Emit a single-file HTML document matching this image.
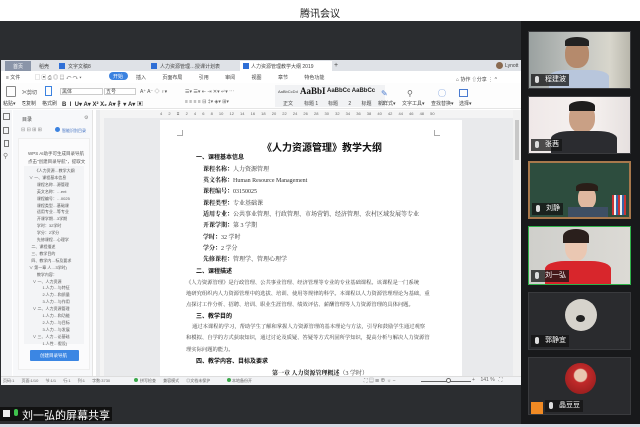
<!DOCTYPE html>
<html><head><meta charset="utf-8"><style>
*{margin:0;padding:0;box-sizing:border-box}
body{width:640px;height:427px;overflow:hidden;background:#2b2d30;position:relative;font-family:"Liberation Sans","Noto Sans CJK SC",sans-serif}
.a{position:absolute}
.t{position:absolute;white-space:nowrap;font-size:5px;color:#444}
.d{position:absolute;white-space:nowrap;font-family:"Liberation Serif","Noto Serif CJK SC",serif;font-size:6px;color:#333}
.p{font-size:5.3px}
.b{font-weight:bold;color:#111}
.tile{position:absolute;left:528px;width:103px;border:1px solid #3a3b3e;background:#1f2023;overflow:hidden}
.lab{position:absolute;left:2px;bottom:2px;height:12px;background:rgba(20,20,20,.75);color:#fff;font-size:7px;line-height:12px;padding:0 3px 0 14px;white-space:nowrap}
.lab:before{content:"";position:absolute;left:4px;top:2px;width:4px;height:7px;border-radius:2px;background:#ddd}
</style></head><body>
<div class="a" style="left:0;top:0;width:640px;height:21px;background:#fff"></div>
<div class="t" style="left:300px;top:5px;font-size:10px;color:#222">腾讯会议</div>
<div class="a" style="left:1px;top:60px;width:520px;height:325px;background:#fff"></div>
<div class="a" style="left:1px;top:60px;width:520px;height:11px;background:#dfe2e7"></div>
<div class="a" style="left:5px;top:61px;width:26px;height:10px;background:#8a95a8"></div>
<div class="t" style="left:13px;top:63px;color:#fff">首页</div>
<div class="t" style="left:39px;top:63px">稻壳</div>
<div class="a" style="left:59px;top:63px;width:6px;height:6px;background:#2f6fd6"></div>
<div class="t" style="left:68px;top:63px">文字文稿8</div>
<div class="a" style="left:151px;top:63px;width:6px;height:6px;background:#2f6fd6"></div>
<div class="t" style="left:160px;top:63px">人力资源管理…授课计划表</div>
<div class="a" style="left:240px;top:61px;width:92px;height:10px;background:#fff"></div>
<div class="a" style="left:243px;top:63px;width:6px;height:6px;background:#2f6fd6"></div>
<div class="t" style="left:251px;top:63px">人力资源管理教学大纲 2019</div>
<div class="t" style="left:334px;top:62px;font-size:7px">+</div>
<div class="a" style="left:496px;top:62px;width:7px;height:7px;border-radius:50%;background:#8a6a50"></div>
<div class="t" style="left:505px;top:63px">Lynott</div>
<div class="t" style="left:6px;top:74px">≡ 文件</div>
<div class="t" style="left:35px;top:74px;color:#666">▢ ▣ ⎙ ◎ ▤ ↶ ↷ ▾</div>
<div class="a" style="left:109px;top:72px;width:19px;height:8px;border-radius:4px;background:#3b82e0"></div>
<div class="t" style="left:113px;top:73px;color:#fff">开始</div>
<div class="t" style="left:136px;top:74px;word-spacing:15px">插入 页面布局 引用 审阅 视图 章节 特色功能</div>
<div class="t" style="left:456px;top:76px">⌂ 协作 ⇧分享 ⋮ ^</div>
<div class="a" style="left:1px;top:83px;width:520px;height:26px;background:#fdfdfd;border-bottom:1px solid #e5e5e5"></div>
<div class="a" style="left:6px;top:86px;width:10px;height:11px;border:1px solid #888;border-radius:1px"></div>
<div class="t" style="left:3px;top:100px">粘贴▾</div>
<div class="t" style="left:22px;top:89px">✂剪切</div>
<div class="t" style="left:22px;top:100px">⎘复制</div>
<div class="a" style="left:45px;top:86px;width:7px;height:10px;border:1px solid #3b82e0"></div>
<div class="t" style="left:42px;top:100px">格式刷</div>
<div class="a" style="left:60px;top:88px;width:43px;height:7px;border:1px solid #ccc;background:#fff"></div>
<div class="t" style="left:62px;top:88px">黑体</div>
<div class="a" style="left:104px;top:88px;width:32px;height:7px;border:1px solid #ccc;background:#fff"></div>
<div class="t" style="left:106px;top:88px">五号</div>
<div class="t" style="left:140px;top:88px;color:#555">A⁺ A⁻ ◇ ♀▾</div>
<div class="t" style="left:62px;top:99px;color:#333;font-size:6px;font-weight:bold">B&nbsp; I&nbsp; U▾ A▾ X² X₂ A▾ 扌▾ A▾ ▣</div>
<div class="t" style="left:185px;top:88px;color:#666">☰▾ ☰▾ ⇤ ⇥ ✕▾ ↵▾ ⋯</div>
<div class="t" style="left:185px;top:99px;color:#666">≡ ≡ ≡ ≡ ⊟ ‡▾ ◈▾ ⊞▾</div>
<div class="a" style="left:275px;top:85px;width:110px;height:22px;background:#f1f2f4"></div>
<div class="t" style="left:278px;top:89px;font-size:4px">AaBbCcDd</div>
<div class="t" style="left:283px;top:100px">正文</div>
<div class="t" style="left:300px;top:86px;font-family:'Liberation Serif',serif;font-size:9px;font-weight:bold;color:#111">AaBbI</div>
<div class="t" style="left:304px;top:100px">标题 1</div>
<div class="t" style="left:327px;top:88px;font-size:6px;font-weight:bold;color:#222">AaBbCc AaBbCc</div>
<div class="t" style="left:328px;top:100px;word-spacing:9px">标题 2 标题 3</div>
<div class="t" style="left:381px;top:89px;color:#4a7bd0;font-size:8px">✎</div>
<div class="t" style="left:378px;top:100px">新样式▾</div>
<div class="t" style="left:407px;top:89px;font-size:8px;color:#666">⚲</div>
<div class="t" style="left:402px;top:100px">文字工具▾</div>
<div class="t" style="left:438px;top:88px;font-size:8px;color:#4a7bd0">◯</div>
<div class="t" style="left:431px;top:100px">查找替换▾</div>
<div class="a" style="left:459px;top:89px;width:9px;height:8px;border:1px solid #4a7bd0"></div>
<div class="t" style="left:459px;top:100px">选择▾</div>
<div class="a" style="left:1px;top:110px;width:11px;height:266px;background:#f4f5f7"></div>
<div class="a" style="left:3px;top:113px;width:7px;height:7px;border:1px solid #777"></div>
<div class="a" style="left:3px;top:127px;width:6px;height:7px;border:1px solid #777"></div>
<div class="a" style="left:4px;top:140px;width:5px;height:7px;border:1px solid #777"></div>
<div class="t" style="left:3px;top:152px;font-size:7px;color:#777">⚲</div>
<div class="a" style="left:13px;top:110px;width:80px;height:266px;background:#f7f8fa;border-right:1px solid #e3e3e3"></div>
<div class="t" style="left:22px;top:116px">目录</div>
<div class="t" style="left:84px;top:115px;color:#888">⚙</div>
<div class="t" style="left:21px;top:127px;color:#888">⊟ ⊟ ⊞ ⊞</div>
<div class="a" style="left:55px;top:127px;width:5px;height:5px;border-radius:50%;background:#3b82e0"></div>
<div class="t" style="left:62px;top:128px;color:#3b6cc0;font-size:4px">智能识别目录</div>
<div class="a" style="left:18px;top:138px;width:72px;height:232px;background:#fbfbfc;border:1px solid #eee"></div>
<div class="t" style="left:28px;top:151px;font-size:4.5px;color:#555">WPS AI助手可生成目录导航</div>
<div class="t" style="left:28px;top:159px;font-size:4.5px;color:#555">点击"创建目录导航"，提取文</div>
<div class="a" style="left:24px;top:166px;width:60px;height:178px;background:#f3f4f6"></div>
<div style="position:absolute;left:28px;top:168px;font-size:4px;line-height:6.9px;color:#555;white-space:pre">      《人力资源…教学大纲
 ∨ 一、课程基本信息
        课程名称…源管理
        英文名称：…ent
        课程编号：…0025
        课程类型…基础课
        适用专业…等专业
        开课学期…3学期
        学时：32学时
        学分：2学分
        先修课程…心理学
   二、课程描述
   三、教学目的
   四、教学内…标及要求
 ∨ 第一章 人…3学时)
        教学内容：
    ∨ 一、人力资源
             1.人力…与特征
             2.人力…和质量
             3.人力…与作用
    ∨ 二、人力资源管理
             1.人力…和功能
             2.人力…与目标
             3.人力…与发展
    ∨ 三、人力…论基础
             1.人性…假设)</div>
<div class="a" style="left:30px;top:350px;width:49px;height:11px;background:#3b86e3;border-radius:1px"></div>
<div class="t" style="left:40px;top:353px;color:#fff;font-size:4.5px">创建目录导航</div>
<div class="a" style="left:96px;top:110px;width:425px;height:266px;background:#e9eaec"></div>
<div class="a" style="left:100px;top:110px;width:421px;height:8px;background:#f4f4f4"></div>
<div class="t" style="left:160px;top:111px;font-size:4px;color:#666;word-spacing:5px">4 2 ⧖ 2 4 6 8 10 12 14 16 18 20 22 24 26 28 30 32 34 36 38 40 42 44 46 48 50</div>
<div class="a" style="left:100px;top:118px;width:4px;height:258px;background:#f4f4f4"></div>
<div class="a" style="left:513px;top:110px;width:8px;height:266px;background:#f1f1f1"></div>
<div class="a" style="left:515px;top:120px;width:4px;height:40px;background:#c8c8c8"></div>
<div class="a" style="left:160px;top:120px;width:302px;height:256px;background:#fff"></div>
<div class="a" style="left:177px;top:130px;width:6px;height:6px;border-right:1px solid #aaa;border-bottom:1px solid #aaa"></div>
<div class="a" style="left:434px;top:130px;width:6px;height:6px;border-left:1px solid #aaa;border-bottom:1px solid #aaa"></div>
<div class="d b" style="left:262px;top:139px;font-size:10px;font-family:'Liberation Sans','Noto Sans CJK SC',sans-serif">《人力资源管理》教学大纲</div>
<div class="d b" style="left:196px;top:152px;font-family:'Liberation Sans','Noto Sans CJK SC',sans-serif">一、课程基本信息</div>
<div class="d" style="left:203px;top:164px"><b class="b">课程名称：</b>人力资源管理</div>
<div class="d" style="left:203px;top:175px"><b class="b">英文名称：</b>Human Resource Management</div>
<div class="d" style="left:203px;top:186px"><b class="b">课程编号：</b>03150025</div>
<div class="d" style="left:203px;top:198px"><b class="b">课程类型：</b>专业基础课</div>
<div class="d" style="left:203px;top:209px"><b class="b">适用专业：</b>公共事业管理、行政管理、市场营销、经济管理、农村区域发展等专业</div>
<div class="d" style="left:203px;top:220px"><b class="b">开课学期：</b>第 3 学期</div>
<div class="d" style="left:203px;top:232px"><b class="b">学时：</b>32 学时</div>
<div class="d" style="left:203px;top:243px"><b class="b">学分：</b>2 学分</div>
<div class="d" style="left:203px;top:254px"><b class="b">先修课程：</b>管理学、管理心理学</div>
<div class="d b" style="left:196px;top:266px;font-family:'Liberation Sans','Noto Sans CJK SC',sans-serif">二、课程描述</div>
<div class="d p" style="left:186px;top:278px">《人力资源管理》是行政管理、公共事业管理、经济管理等专业的专业基础课程。该课程是一门系统</div>
<div class="d p" style="left:186px;top:289px">地研究组织内人力资源管理中的选拔、培训、使用等规律的科学。本课程以人力资源管理理论为基础，重</div>
<div class="d p" style="left:186px;top:300px">点探讨工作分析、招聘、培训、职业生涯管理、绩效评估、薪酬管理等人力资源管理的具体问题。</div>
<div class="d b" style="left:196px;top:311px;font-family:'Liberation Sans','Noto Sans CJK SC',sans-serif">三、教学目的</div>
<div class="d p" style="left:192px;top:322px">通过本课程的学习，帮助学生了解和掌握人力资源管理的基本理论与方法，引导和鼓励学生通过观察</div>
<div class="d p" style="left:186px;top:333px">和模拟、自学的方式获取知识，通过讨论及质疑、答疑等方式巩固所学知识，提高分析与解决人力资源管</div>
<div class="d p" style="left:186px;top:345px">理实际问题的能力。</div>
<div class="d b" style="left:196px;top:356px;font-family:'Liberation Sans','Noto Sans CJK SC',sans-serif">四、教学内容、目标及要求</div>
<div class="d" style="left:272px;top:368px"><b class="b">第一章 人力资源管理概述</b>（3 学时）</div>
<div class="a" style="left:1px;top:376px;width:520px;height:9px;background:#f2f3f5;border-top:1px solid #ddd"></div>
<div class="t" style="left:3px;top:378px;font-size:4px;color:#666;word-spacing:6px">页码:1 页面:1/10 节:1/1 行:1 列:1 字数:3730</div>
<div class="a" style="left:134px;top:378px;width:4px;height:4px;border-radius:50%;background:#3aa84a"></div>
<div class="t" style="left:140px;top:378px;font-size:4px;color:#666;word-spacing:6px">拼写检查 兼容模式 ◎文档未保护</div>
<div class="a" style="left:227px;top:378px;width:4px;height:4px;border-radius:50%;background:#3aa84a"></div>
<div class="t" style="left:232px;top:378px;font-size:4px;color:#666">本地备份开</div>
<div class="t" style="left:364px;top:377px;font-size:5px;color:#666">⛶ ▤ ☰ ⊕ ☼ −</div>
<div class="a" style="left:421px;top:381px;width:50px;height:1px;background:#666"></div>
<div class="a" style="left:446px;top:378px;width:5px;height:5px;border:1px solid #666;border-radius:50%;background:#fff"></div>
<div class="t" style="left:472px;top:377px;font-size:5px;color:#666">+&nbsp;&nbsp;&nbsp; 141 %&nbsp;&nbsp; ⛶</div>
<div class="a" style="left:521px;top:21px;width:119px;height:406px;background:#18191b"></div>
<div class="tile" style="top:31px;height:58px;background:linear-gradient(90deg,#9aa1a0 0%,#c4c6c2 50%,#d8d6cc 80%,#b9b7ac 100%)">
 <div class="a" style="left:36px;top:8px;width:24px;height:28px;border-radius:45%;background:#b58a6c"></div>
 <div class="a" style="left:36px;top:5px;width:24px;height:9px;border-radius:50% 50% 0 0;background:#222"></div>
 <div class="a" style="left:20px;top:38px;width:60px;height:22px;border-radius:30% 30% 0 0;background:#b8c6dc"></div>
 <div class="lab">程建波</div></div>
<div class="tile" style="top:96px;height:58px;background:linear-gradient(90deg,#efe8e8,#f6f2f0 60%,#e6e0df)">
 <div class="a" style="left:40px;top:6px;width:26px;height:30px;border-radius:45%;background:#c9a085"></div>
 <div class="a" style="left:40px;top:4px;width:26px;height:10px;border-radius:50% 50% 0 0;background:#1e1e1e"></div>
 <div class="a" style="left:22px;top:34px;width:66px;height:24px;border-radius:30% 30% 0 0;background:#2b2c30"></div>
 <div class="lab">张茜</div></div>
<div class="tile" style="top:161px;height:58px;background:#2d4d3e;border:2px solid #a8784c">
 <div class="a" style="left:48px;top:24px;width:18px;height:22px;border-radius:45%;background:#e0b8a0"></div>
 <div class="a" style="left:46px;top:20px;width:22px;height:8px;border-radius:50% 50% 0 0;background:#2a1e18"></div>
 <div class="a" style="left:38px;top:44px;width:40px;height:14px;background:#3e4f64"></div>
 <div class="a" style="left:82px;top:32px;width:14px;height:20px;background:repeating-linear-gradient(90deg,#c33 0 2px,#eee 2px 4px,#36a 4px 6px)"></div>
 <div class="lab">刘静</div></div>
<div class="tile" style="top:226px;height:59px;background:linear-gradient(90deg,#cfcfcb,#dcdad5);border:1px solid #2fb24a">
 <div class="a" style="left:36px;top:6px;width:22px;height:28px;border-radius:45%;background:#eac7b2"></div>
 <div class="a" style="left:34px;top:2px;width:26px;height:14px;border-radius:50% 50% 0 0;background:#2a1f1c"></div>
 <div class="a" style="left:16px;top:34px;width:66px;height:26px;border-radius:30% 30% 0 0;background:#d8262c"></div>
 <div class="lab">刘一弘</div></div>
<div class="tile" style="top:292px;height:58px;background:#2a2b2e">
 <div class="a" style="left:36px;top:6px;width:32px;height:32px;border-radius:50%;background:#d6d3cc"></div>
 <div class="a" style="left:47px;top:22px;width:9px;height:7px;border-radius:50%;background:#222"></div>
 <div class="lab">郭静宜</div></div>
<div class="tile" style="top:357px;height:58px;background:#2a2b2e">
 <div class="a" style="left:36px;top:5px;width:31px;height:31px;border-radius:50%;background:radial-gradient(circle at 50% 40%,#e9c7b0 0 25%,#c22a2a 30%,#8a1a1a 100%)"></div>
 <div class="a" style="left:2px;top:44px;width:12px;height:12px;background:#f08a24"></div>
 <div class="lab" style="left:16px">晶豆豆</div></div>
<div class="a" style="left:0;top:407px;width:112px;height:14px;background:#111"></div>
<div class="a" style="left:3px;top:410px;width:7px;height:7px;background:#eee"></div>
<div class="a" style="left:14px;top:409px;width:4px;height:7px;border-radius:2px;background:#3fc24d"></div>
<div class="t" style="left:22px;top:407px;font-size:11px;color:#fff">刘一弘的屏幕共享</div>
<div class="a" style="left:0;top:424px;width:640px;height:3px;background:#d6dbe4"></div>
</body></html>
